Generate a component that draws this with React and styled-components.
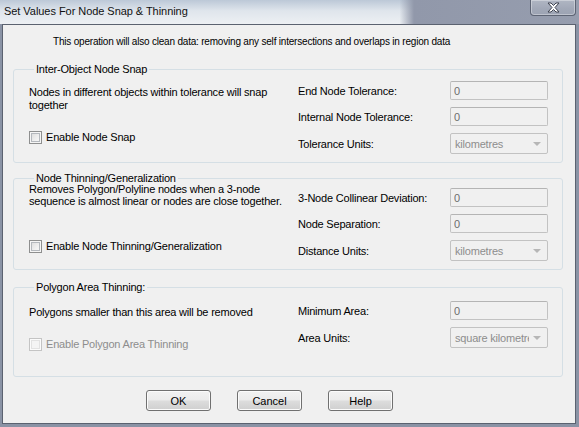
import React from 'react';
import styled, { createGlobalStyle } from 'styled-components';

const GlobalStyle = createGlobalStyle`
  html, body {
    margin: 0;
    padding: 0;
    overflow: hidden;
    background: #8e97a8;
  }
`;

const Window = styled.div`
  width: 579px;
  height: 427px;
  display: flex;
  flex-direction: column;
  background: #8a93a5;
  font-family: 'Liberation Sans', Arial, sans-serif;
  font-size: 11px;
  letter-spacing: -0.2px;
  color: #000000;
`;

const TitleBar = styled.div`
  height: 24px;
  display: flex;
  align-items: flex-start;
  padding-left: 4px;
  background:
    linear-gradient(to right, rgba(0,0,0,0) 0%, rgba(0,0,0,0) 69%, #9198aa 71.5%, #969dae 100%),
    linear-gradient(to bottom, #bcc8d7 0%, #dfe5ec 45%, #edf0f3 100%);
`;

const Title = styled.div`
  font-size: 11px;
  letter-spacing: -0.05px;
  line-height: 22px;
  color: #111111;
  white-space: nowrap;
`;

const CloseButton = styled.div`
  margin-left: auto;
  margin-right: 3px;
  width: 46px;
  height: 16px;
  box-sizing: border-box;
  display: flex;
  align-items: center;
  justify-content: center;
  border: 1px solid #5d6474;
  border-top: none;
  border-radius: 0 0 4px 4px;
  background: linear-gradient(to bottom, #b0b6c3 0%, #a1a8b7 60%, #9ca3b3 100%);
  box-shadow: inset 0 0 0 1px rgba(255, 255, 255, 0.35);
`;

const Client = styled.div`
  flex: 1;
  margin: 0 3px 3px 2px;
  border: 1px solid #5b6270;
  background: #f0f0f0;
  display: flex;
  flex-direction: column;
`;

const Intro = styled.div`
  padding: 10px 0 0 50px;
  font-size: 10px;
  letter-spacing: -0.2px;
  line-height: 13px;
  white-space: nowrap;
`;

const Group = styled.fieldset`
  margin: ${(p) => p.$top}px 12px 0 10px;
  padding: ${(p) => p.$padTop}px 14px ${(p) => p.$padBottom}px 15px;
  border: 1px solid #d5dfe5;
  border-radius: 3px;
  display: grid;
  grid-template-columns: 1fr auto;
  min-width: 0;
`;

const Legend = styled.legend`
  margin-left: 5px;
  padding: 0 2px;
  line-height: 10px;
`;

const Left = styled.div`
  display: flex;
  flex-direction: column;
`;

const Description = styled.div`
  margin-top: ${(p) => p.$top}px;
  line-height: ${(p) => p.$lh || 13}px;
  white-space: nowrap;
`;

const CheckRow = styled.label`
  margin-top: ${(p) => p.$top}px;
  display: flex;
  align-items: center;
  gap: 4px;
  height: 13px;
  line-height: 13px;
  color: ${(p) => (p.$disabled ? '#8d8d8d' : '#000000')};
  white-space: nowrap;
`;

const Box = styled.span`
  width: 13px;
  height: 13px;
  box-sizing: border-box;
  border: 1px solid ${(p) => (p.$disabled ? '#c4c4c4' : '#8e8f8f')};
  background: ${(p) =>
    p.$disabled
      ? '#f4f4f4'
      : 'linear-gradient(135deg, #d8d8d8 0%, #f0f0f0 60%, #fbfbfb 100%)'};
  box-shadow: ${(p) =>
    p.$disabled
      ? 'inset 0 0 0 1px #fbfbfb, inset 0 0 0 2px #e2e2e2'
      : 'inset 0 0 0 1px #f5f5f5, inset 0 0 0 2px #b4b8bd'};
`;

const Fields = styled.div`
  display: grid;
  grid-template-columns: 152px 98px;
  row-gap: 7px;
  align-content: start;
`;

const FieldLabel = styled.div`
  display: flex;
  align-items: center;
  padding-top: 2px;
  line-height: 13px;
  white-space: nowrap;
`;

const TextBox = styled.input`
  width: 98px;
  height: 19px;
  box-sizing: border-box;
  margin: 0;
  padding: 0 3px;
  border: 1px solid #c2c2c2;
  border-top-color: #b4b4b4;
  border-radius: 2px;
  background: #f0f0f0;
  font-family: 'Liberation Sans', Arial, sans-serif;
  font-size: 11px;
  color: #6d6d6d;
  outline: none;
`;

const SelectWrap = styled.div`
  position: relative;
  width: 98px;
  height: 21px;

  &::after {
    content: '';
    position: absolute;
    right: 7px;
    top: 9px;
    border-left: 4px solid transparent;
    border-right: 4px solid transparent;
    border-top: 4px solid #b6b6b6;
  }
`;

const Select = styled.select`
  appearance: none;
  width: 98px;
  height: 21px;
  box-sizing: border-box;
  margin: 0;
  padding: 0 18px 0 4px;
  border: 1px solid #c2c2c2;
  border-radius: 2px;
  background: #f0f0f0;
  font-family: 'Liberation Sans', Arial, sans-serif;
  font-size: 11px;
  letter-spacing: -0.2px;
  color: #8d8d8d;
  opacity: 1;
`;

const Buttons = styled.div`
  margin-top: 13px;
  padding-left: 143px;
  display: flex;
  gap: 26px;
`;

const Button = styled.button`
  width: 65px;
  height: 21px;
  box-sizing: border-box;
  margin: 0;
  padding: 0;
  border: 1px solid #707070;
  border-radius: 3px;
  background: linear-gradient(to bottom, #f2f2f2 0%, #ebebeb 48%, #dddddd 52%, #cfcfcf 100%);
  box-shadow: inset 0 0 0 1px #fbfbfb;
  font-family: 'Liberation Sans', Arial, sans-serif;
  font-size: 11px;
  color: #000000;
`;

const CloseIcon = () => (
  <svg width="13" height="11" viewBox="0 0 13 11">
    <path
      d="M1 1 H4 L6.5 3.5 L9 1 H12 L8 5.5 L12 10 H9 L6.5 7.5 L4 10 H1 L5 5.5 Z"
      fill="#ffffff"
      stroke="#3e4350"
      strokeWidth="1"
      strokeLinejoin="round"
    />
  </svg>
);

const Check = ({ children, top, disabled }) => (
  <CheckRow $top={top} $disabled={disabled}>
    <Box $disabled={disabled} />
    {children}
  </CheckRow>
);

const Unit = ({ value }) => (
  <SelectWrap>
    <Select disabled value={value} onChange={() => {}}>
      <option value={value}>{value}</option>
    </Select>
  </SelectWrap>
);

export default function App() {
  return (
    <>
      <GlobalStyle />
      <Window>
        <TitleBar>
          <Title>Set Values For Node Snap &amp; Thinning</Title>
          <CloseButton>
            <CloseIcon />
          </CloseButton>
        </TitleBar>
        <Client>
          <Intro>
            This operation will also clean data: removing any self intersections and overlaps in region data
          </Intro>

          <Group $top={16} $padTop={7} $padBottom={8}>
            <Legend>Inter-Object Node Snap</Legend>
            <Left>
              <Description $top={5}>
                Nodes in different objects within tolerance will snap
                <br />
                together
              </Description>
              <Check top={19}>Enable Node Snap</Check>
            </Left>
            <Fields>
              <FieldLabel>End Node Tolerance:</FieldLabel>
              <TextBox disabled value="0" readOnly />
              <FieldLabel>Internal Node Tolerance:</FieldLabel>
              <TextBox disabled value="0" readOnly />
              <FieldLabel>Tolerance Units:</FieldLabel>
              <Unit value="kilometres" />
            </Fields>
          </Group>

          <Group $top={10} $padTop={5} $padBottom={8}>
            <Legend>Node Thinning/Generalization</Legend>
            <Left>
              <Description $top={-5} $lh={12}>
                Removes Polygon/Polyline nodes when a 3-node
                <br />
                sequence is almost linear or nodes are close together.
              </Description>
              <Check top={33}>Enable Node Thinning/Generalization</Check>
            </Left>
            <Fields>
              <FieldLabel>3-Node Collinear Deviation:</FieldLabel>
              <TextBox disabled value="0" readOnly />
              <FieldLabel>Node Separation:</FieldLabel>
              <TextBox disabled value="0" readOnly />
              <FieldLabel>Distance Units:</FieldLabel>
              <Unit value="kilometres" />
            </Fields>
          </Group>

          <Group $top={12} $padTop={9} $padBottom={25}>
            <Legend>Polygon Area Thinning:</Legend>
            <Left>
              <Description $top={5}>Polygons smaller than this area will be removed</Description>
              <Check top={19} disabled>Enable Polygon Area Thinning</Check>
            </Left>
            <Fields>
              <FieldLabel>Minimum Area:</FieldLabel>
              <TextBox disabled value="0" readOnly />
              <FieldLabel>Area Units:</FieldLabel>
              <Unit value="square kilometres" />
            </Fields>
          </Group>

          <Buttons>
            <Button>OK</Button>
            <Button>Cancel</Button>
            <Button>Help</Button>
          </Buttons>
        </Client>
      </Window>
    </>
  );
}
